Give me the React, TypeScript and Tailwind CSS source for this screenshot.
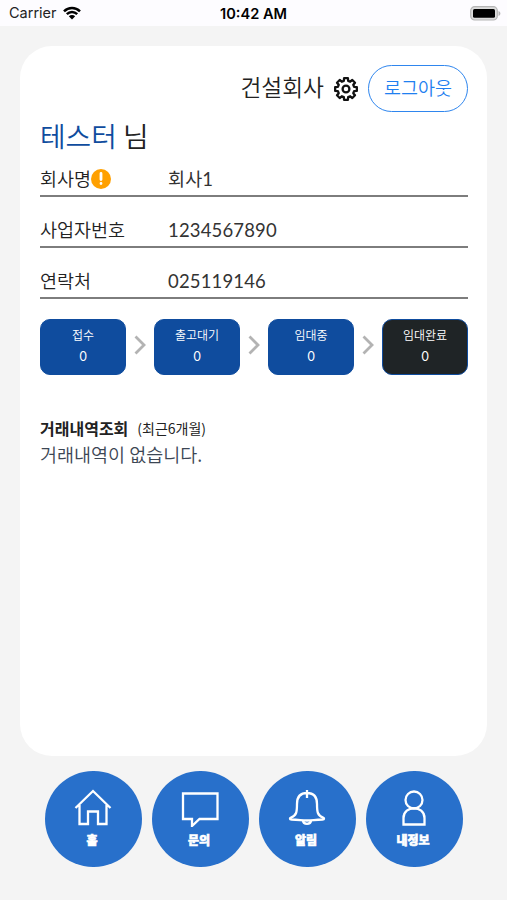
const infos = [
  { label: "회사명", value: "회사1", warn: true },
  { label: "사업자번호", value: "1234567890", warn: false },
  { label: "연락처", value: "025119146", warn: false },
]

const steps = [
  { label: "접수", count: 0, done: false },
  { label: "출고대기", count: 0, done: false },
  { label: "임대중", count: 0, done: false },
  { label: "임대완료", count: 0, done: true },
]

const tabs = [
  {
    label: "홈",
    icon: <path d="M1.5 20 19 3 36.5 20M5.5 17V36H14V23.5H24V36H32.5V17" />,
  },
  {
    label: "문의",
    icon: <path d="M2 5.5H36.500V31H18.500L11 38V31H2Z" />,
  },
  {
    label: "알림",
    icon: (
      <>
        <path d="M19 2V10M19 5C11.500 5 9 10 9 16C9 24 8.500 27.500 3 29.500C1.500 30.200 1.500 31.500 3.500 31.500C11 31.500 13 32.500 19 32.500S27 31.500 34.500 31.500C36.500 31.500 36.500 30.200 35 29.500C29.500 27.500 29 24 29 16C29 10 26.500 5 19 5Z" />
        <path d="M15 32.500C15.500 37 22.500 37 23 32.500" />
      </>
    ),
  },
  {
    label: "내정보",
    icon: (
      <>
        <circle cx="19" cy="12" r="8.500" />
        <path d="M8.500 36.500V30C8.500 17 29.500 17 29.500 30V36.500Z" />
      </>
    ),
  },
]

// 8 teeth, 4 points per tooth: [angle offset, radius]
const gearPoints = Array.from({ length: 8 })
  .flatMap((_, i) =>
    [
      [-15, 8.4],
      [-10, 11],
      [10, 11],
      [15, 8.4],
    ].map(([offset, r]) => {
      const a = ((i * 45 + offset) * Math.PI) / 180
      return `${(13 + r * Math.sin(a)).toFixed(2)},${(13 - r * Math.cos(a)).toFixed(2)}`
    })
  )
  .join(" ")

function GearIcon() {
  return (
    <svg viewBox="0 0 26 26" className="mx-[9px] size-[26px]" fill="none" stroke="#111" strokeWidth="2.300" strokeLinejoin="round">
      <polygon points={gearPoints} />
      <circle cx="13" cy="13" r="3.400" />
    </svg>
  )
}

function StatusBar() {
  return (
    <header className="grid h-[26px] grid-cols-3 items-center bg-[#fdfcff] px-[9px] pt-px font-['Inter',sans-serif] text-[14.500px] font-normal leading-none text-[#222]">
      <div className="flex items-center gap-[6px]">
        <span>Carrier</span>
        <svg viewBox="0 0 18 14" className="mb-px h-[14px] w-[18px]" fill="none" stroke="#000" strokeWidth="2.500">
          <path d="M1 5.300C5.500 .9 12.500 .9 17 5.300M3.800 8.200C6.800 5.300 11.200 5.300 14.200 8.200" />
          <path d="M9 13.500 5.800 10.300C7.600 8.700 10.400 8.700 12.200 10.300Z" fill="#000" stroke="none" />
        </svg>
      </div>
      <span className="pt-px text-center text-[14.600px] font-semibold text-black">10:42 AM</span>
      <svg viewBox="0 0 31 15" className="-mr-[3px] mb-px h-[15px] w-[31px] justify-self-end">
        <rect x=".7" y=".7" width="26.600" height="13.300" rx="4" fill="#ddd" stroke="#b5b5b5" strokeWidth="1.200" />
        <rect x="3" y="3" width="22" height="8.800" rx="1.500" fill="#000" />
        <path d="M28.500 5C31 6 31 9 28.500 10Z" fill="#b5b5b5" />
      </svg>
    </header>
  )
}

export default function App() {
  return (
    <div className="flex h-[900px] w-[507px] flex-col overflow-hidden bg-[#f4f4f4] font-['Noto_Sans_CJK_KR',sans-serif] font-[350] text-[#222]">
      <StatusBar />

      <main className="mx-5 mt-5 flex h-[710px] flex-col rounded-[32px] bg-white pl-5 pr-[19px] pt-[19px]">
        <div className="flex h-[47px] items-center justify-end">
          <span className="-mt-[3px] text-[22.700px] leading-none">건설회사</span>
          <GearIcon />
          <button className="h-[47px] w-[100px] rounded-full border-[1.500px] border-[#2f86ee] pb-[3px] text-[18.500px] leading-none text-[#1f80f0]">
            로그아웃
          </button>
        </div>

        <h1 className="mt-[3px] h-[40px] text-[27.800px] leading-[40px]">
          <span className="text-[#0f4c9e]">테스터</span> 님
        </h1>

        <dl className="mt-[2px]">
          {infos.map((info) => (
            <div key={info.label} className="mb-[11px] flex h-[40px] items-center border-b-2 border-[#7d7d7d] pt-[5px] text-[18.500px] leading-none">
              <dt className="flex w-[128px] items-center">
                {info.label}
                {info.warn && (
                  <svg viewBox="0 0 20 20" className="mt-px size-5">
                    <circle cx="10" cy="10" r="10" fill="#ffa000" />
                    <path d="M10 4.500V10.500M10 14.500V14.600" stroke="#fff" strokeWidth="2.800" strokeLinecap="round" />
                  </svg>
                )}
              </dt>
              <dd className="pt-[2px] font-['Lato','Noto_Sans_CJK_KR',sans-serif] font-normal tracking-[0.15px] text-[#333]">{info.value}</dd>
            </div>
          ))}
        </dl>

        <div className="mt-[9px] flex items-center justify-between">
          {steps.map((step, i) => (
            <div key={step.label} className="contents">
              {i > 0 && (
                <svg viewBox="0 0 12 20" className="-mt-[4px] h-5 w-3" fill="none" stroke="#b3b3b3" strokeWidth="2.800">
                  <path d="M1.500 1.500 10 10 1.500 18.500" />
                </svg>
              )}
              <div
                className={
                  step.done
                    ? "flex h-[56px] w-[86px] flex-col items-center rounded-[10px] border border-[#0f4c9e] bg-[#1f2426] pt-[8px] text-[12px] text-white"
                    : "flex h-[56px] w-[86px] flex-col items-center rounded-[10px] border border-[#0f4c9e] bg-[#0f4c9e] pt-[8px] text-[12px] text-white"
                }
              >
                <span className="leading-[13px]">{step.label}</span>
                <span className="mt-[9px] font-['Lato'] text-[12.500px] font-normal leading-[13px]">{step.count}</span>
              </div>
            </div>
          ))}
        </div>

        <div className="mt-[42px] flex h-[22px] items-center">
          <h2 className="text-[16px] font-bold leading-none">거래내역조회</h2>
          <span className="ml-[9px] text-[14px] font-normal leading-none">(최근6개월)</span>
        </div>
        <p className="mt-[4px] text-[18.500px] leading-[22px] text-[#3c4654]">거래내역이 없습니다.</p>
      </main>

      <nav className="mx-auto mt-[15px] flex gap-[10px]">
        {tabs.map((tab) => (
          <a key={tab.label} className="flex h-[96px] w-[97px] flex-col items-center rounded-full bg-[#2870cb] pt-[17px] text-white">
            <svg viewBox="0 0 38 39" className="h-[39px] w-[38px]" fill="none" stroke="currentColor" strokeWidth="2.300">
              {tab.icon}
            </svg>
            <span className="mr-[2px] mt-[6px] text-[12px] font-black leading-[14px] [-webkit-text-stroke:0.6px_white]">{tab.label}</span>
          </a>
        ))}
      </nav>
    </div>
  )
}
